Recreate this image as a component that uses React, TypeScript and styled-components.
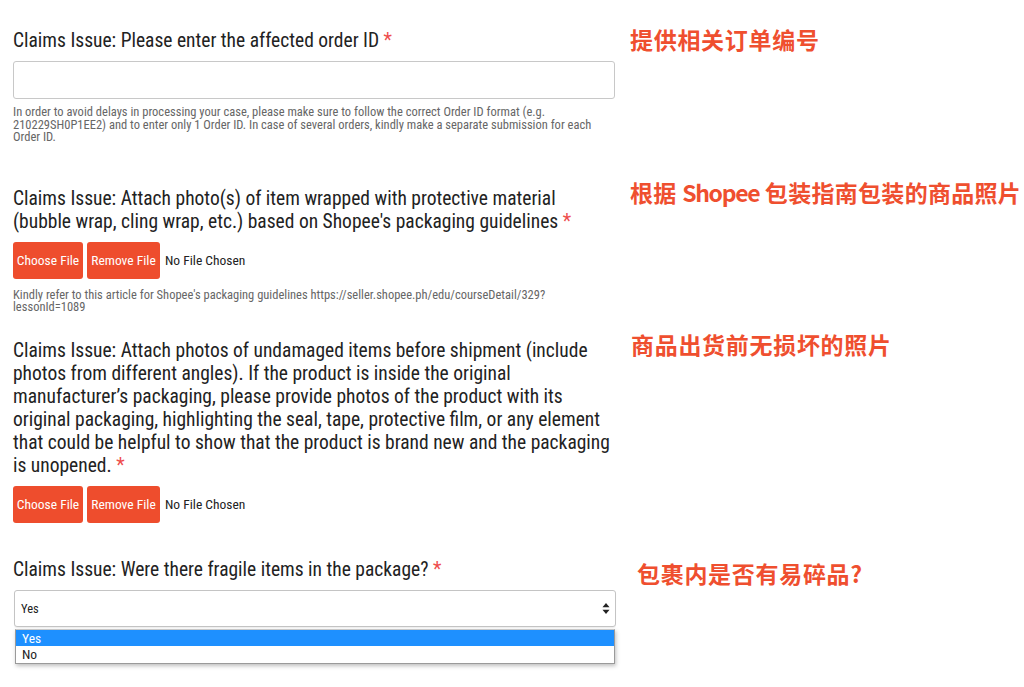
import React from "react";
import styled, { createGlobalStyle } from "styled-components";

const GlobalStyle = createGlobalStyle`
  html, body { margin: 0; padding: 0; background: #ffffff; }
  body { font-family: "Roboto Condensed", Roboto, "Liberation Sans", sans-serif; color: #222; }
  * { box-sizing: border-box; }
`;

const Page = styled.div`
  width: 1024px;
  height: 687px;
  padding: 29px 0 0 13px;
  overflow: hidden;
`;

const Section = styled.section<{ $gap: number }>`
  display: flex;
  align-items: flex-start;
  margin-bottom: ${(p) => p.$gap}px;
`;

const Field = styled.div`
  width: 603px;
  flex: none;
  display: flex;
  flex-direction: column;
`;

const Title = styled.div`
  font-size: 19.5px;
  line-height: 23px;
  color: #222;
  margin-bottom: 9px;
`;

const Star = styled.span`
  color: #ee4d4d;
`;

const TextInput = styled.input`
  width: 602px;
  height: 38px;
  border: 1px solid #c8c8c8;
  border-radius: 3px;
  background: #fff;
  outline: none;
`;

const Help = styled.p<{ $top: number }>`
  margin: ${(p) => p.$top}px 0 0;
  font-size: 12.5px;
  line-height: 12.5px;
  color: #666;
`;

const FileRow = styled.div`
  display: flex;
  align-items: center;
  gap: 4px;
  height: 37px;
`;

const FileButton = styled.button<{ $w: number }>`
  width: ${(p) => p.$w}px;
  height: 37px;
  border: none;
  border-radius: 3px;
  background: #ee4d2d;
  color: #fff;
  font-family: inherit;
  font-size: 13.5px;
  padding: 0;
`;

const NoFile = styled.span`
  font-size: 13.5px;
  color: #222;
  margin-left: 1px;
`;

const Note = styled.div<{ $top: number; $left: number; $spacing?: number }>`
  margin: ${(p) => p.$top}px 0 0 ${(p) => p.$left}px;
  font-family: "Noto Sans CJK SC", "Microsoft YaHei", sans-serif;
  font-weight: 700;
  font-size: 23px;
  letter-spacing: ${(p) => p.$spacing ?? 0.7}px;
  line-height: 26px;
  color: #ef4f2f;
  white-space: nowrap;
`;

const Latin = styled.span`
  letter-spacing: -1.3px;
`;

const SelectBox = styled.div`
  width: 602px;
  height: 37px;
  margin-left: 1px;
  border: 1px solid #c4c4c4;
  border-radius: 3px;
  background: #fff;
  display: flex;
  align-items: center;
  justify-content: space-between;
  padding: 0 5px 0 6px;
  font-size: 12.5px;
  color: #222;
  box-shadow: 0 1px 1px rgba(0, 0, 0, 0.06);
`;

const OptionList = styled.ul`
  list-style: none;
  margin: 2px 0 0 2px;
  padding: 0;
  width: 600px;
  border: 1px solid #9a9a9a;
  border-top-color: #c8c8c8;
  background: #fff;
  box-shadow: 1px 2px 4px rgba(0, 0, 0, 0.25);
`;

const Option = styled.li<{ $active?: boolean }>`
  height: 16.5px;
  line-height: 16.5px;
  padding-left: 6px;
  font-size: 13.5px;
  background: ${(p) => (p.$active ? "#1e90ff" : "#fff")};
  color: ${(p) => (p.$active ? "#fff" : "#222")};
`;

const Arrows = () => (
  <svg width="8" height="13" viewBox="0 0 8 13" aria-hidden="true">
    <path d="M4 1 L7.5 5.2 L0.5 5.2 Z" fill="#222" />
    <path d="M4 12 L7.5 7.8 L0.5 7.8 Z" fill="#222" />
  </svg>
);

export default function App() {
  return (
    <>
      <GlobalStyle />
      <Page>
        <Section $gap={43}>
          <Field>
            <Title>
              Claims Issue: Please enter the affected order ID <Star>*</Star>
            </Title>
            <TextInput />
            <Help $top={7}>
              In order to avoid delays in processing your case, please make sure to follow the correct Order ID format (e.g.
              210229SH0P1EE2) and to enter only 1 Order ID. In case of several orders, kindly make a separate submission for each
              Order ID.
            </Help>
          </Field>
          <Note $top={-3} $left={14}>提供相关订单编号</Note>
        </Section>

        <Section $gap={25}>
          <Field>
            <Title>
              Claims Issue: Attach photo(s) of item wrapped with protective material (bubble wrap, cling wrap, etc.) based on
              Shopee's packaging guidelines <Star>*</Star>
            </Title>
            <FileRow>
              <FileButton $w={70}>Choose File</FileButton>
              <FileButton $w={73}>Remove File</FileButton>
              <NoFile>No File Chosen</NoFile>
            </FileRow>
            <Help $top={10}>
              Kindly refer to this article for Shopee's packaging guidelines https://seller.shopee.ph/edu/courseDetail/329?
              lessonId=1089
            </Help>
          </Field>
          <Note $top={-8} $left={14} $spacing={0.3}>
            根据 <Latin>Shopee</Latin> 包装指南包装的商品照片
          </Note>
        </Section>

        <Section $gap={35}>
          <Field>
            <Title>
              Claims Issue: Attach photos of undamaged items before shipment (include photos from different angles). If the
              product is inside the original manufacturer’s packaging, please provide photos of the product with its original
              packaging, highlighting the seal, tape, protective film, or any element that could be helpful to show that the
              product is brand new and the packaging is unopened. <Star>*</Star>
            </Title>
            <FileRow>
              <FileButton $w={70}>Choose File</FileButton>
              <FileButton $w={73}>Remove File</FileButton>
              <NoFile>No File Chosen</NoFile>
            </FileRow>
          </Field>
          <Note $top={-8} $left={15}>商品出货前无损坏的照片</Note>
        </Section>

        <Section $gap={0}>
          <Field>
            <Title>
              Claims Issue: Were there fragile items in the package? <Star>*</Star>
            </Title>
            <SelectBox>
              <span>Yes</span>
              <Arrows />
            </SelectBox>
            <OptionList>
              <Option $active>Yes</Option>
              <Option>No</Option>
            </OptionList>
          </Field>
          <Note $top={2} $left={21}>包裹内是否有易碎品?</Note>
        </Section>
      </Page>
    </>
  );
}
